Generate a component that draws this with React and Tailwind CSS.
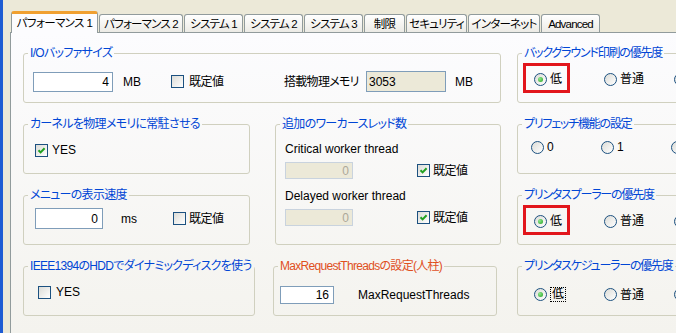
import React from 'react'

const tabs = [
  { label: 'パフォーマンス 1', w: 'w-[87px]', active: true },
  { label: 'パフォーマンス 2', w: 'w-[84px]' },
  { label: 'システム 1', w: 'w-[59px]' },
  { label: 'システム 2', w: 'w-[59px]' },
  { label: 'システム 3', w: 'w-[59px]' },
  { label: '制限', w: 'w-[41px]' },
  { label: 'セキュリティ', w: 'w-[61px]' },
  { label: 'インターネット', w: 'w-[72px]' },
  { label: 'Advanced', w: 'w-[59px]' },
]

const Check = ({ checked }) => (
  <span className="inline-flex h-[13px] w-[13px] shrink-0 items-center justify-center border border-[#1c5180] bg-gradient-to-br from-[#dcdcd7] to-white">
    {checked && (
      <svg width="11" height="11" viewBox="0 0 11 11">
        <path d="M2.5 5.2 L4.6 7.4 L8.6 3.2" fill="none" stroke="#21a121" strokeWidth="2" />
      </svg>
    )}
  </span>
)

const Radio = ({ checked }) => (
  <span className="inline-flex h-[13px] w-[13px] shrink-0 items-center justify-center rounded-full border border-[#1c5180] bg-gradient-to-br from-[#dcdcd7] to-white">
    {checked && <span className="h-[5px] w-[5px] rounded-full bg-[radial-gradient(circle_at_35%_35%,#8fe88c,#21a121)]" />}
  </span>
)

const Group = ({ title, className, titleClass, tight, children }) => (
  <fieldset className={`min-w-0 rounded-[3px] border border-[#d0d0bf] ${className}`}>
    <legend
      className={`ml-[4px] whitespace-nowrap px-[2px] leading-[14px] ${tight ? 'tracking-[-1.2px]' : 'tracking-[-0.7px]'} ${titleClass || 'text-[#0046d5]'}`}
    >
      {title}
    </legend>
    {children}
  </fieldset>
)

// right column: three radio options, the third one is cut off by the window edge
const RadioRow = ({ items, pad, marked, focus, first = true }) => (
  <div className={`flex items-center ${pad}`}>
    {items.map((t, i) => (
      <div key={i} className="relative flex w-[70px] shrink-0 items-center gap-[3px] whitespace-nowrap">
        <Radio checked={i === 0 && first} />
        {t && <span className={i === 0 && focus ? 'border border-dotted border-black px-[1px] leading-[13px]' : ''}>{t}</span>}
        {i === 0 && marked && (
          <span className="pointer-events-none absolute -left-[11px] -top-[9px] h-[30px] w-[47px] border-[3px] border-[#e2161c]" />
        )}
      </div>
    ))}
  </div>
)

export default function App() {
  return (
    <div className="flex h-[333px] w-[676px] overflow-hidden bg-[#ece9d8] font-['Liberation_Sans','Noto_Sans_CJK_JP',sans-serif] text-[12px] leading-[14px] text-black [font-feature-settings:'palt']">
      {/* window frame */}
      <div className="w-[3px] shrink-0 bg-[#1f5dd3]" />
      <div className="flex min-w-0 flex-1 flex-col pl-[7px] pt-[11px]">
        {/* tab strip */}
        <div className="relative z-10 flex h-[21px] items-end gap-[1px] pl-[1px]">
          {tabs.map((t) =>
            t.active ? (
              <div
                key={t.label}
                className={`${t.w} -mb-px flex h-[22px] shrink-0 items-center justify-center whitespace-nowrap rounded-t-[3px] border-x border-t-[3px] border-x-[#919b9c] border-t-[#f0a030] bg-[#fcfcfe] pb-[2px] text-[11.5px] tracking-[-0.6px]`}
              >
                {t.label}
              </div>
            ) : (
              <div
                key={t.label}
                className={`${t.w} flex h-[18px] shrink-0 items-center justify-center whitespace-nowrap rounded-t-[3px] border-x border-t border-[#919b9c] bg-gradient-to-b from-white to-[#ecebe5] text-[11.5px] tracking-[-0.8px]`}
              >
                {t.label}
              </div>
            )
          )}
        </div>

        {/* tab page */}
        <div className="flex-1 border-l border-t border-[#919b9c] bg-gradient-to-b from-[#fcfcfe] to-[#f4f3ee] pl-[12px] pt-[13px]">
          <div className="grid grid-cols-[234px_228px_200px] grid-rows-[57px_57px_57px_57px] gap-x-[16px] gap-y-[14px]">
            <Group title="I/Oバッファサイズ" className="col-span-2 col-start-1 row-start-1">
              <div className="flex items-center pl-[9px] pt-[11px]">
                <div className="flex h-[20px] w-[80px] items-center justify-end border border-[#7f9db9] bg-white pr-[3px]">4</div>
                <span className="w-[58px] pl-[10px]">MB</span>
                <div className="flex w-[113px] items-center gap-[5px]">
                  <Check />
                  <span className="tracking-[-0.5px]">既定値</span>
                </div>
                <span className="w-[82px] whitespace-nowrap tracking-[-0.7px]">搭載物理メモリ</span>
                <div className="flex h-[21px] w-[80px] items-center border border-[#7f9db9] bg-[#ece9d8] pl-[2px]">3053</div>
                <span className="pl-[9px]">MB</span>
              </div>
            </Group>

            <Group title="バックグラウンド印刷の優先度" tight className="col-start-3 row-start-1 w-[200px]">
              <RadioRow items={['低', '普通', '']} pad="pl-[16px] pt-[12px]" marked />
            </Group>

            <Group title="カーネルを物理メモリに常駐させる" className="col-start-1 row-start-2 w-[227px]">
              <div className="flex items-center gap-[4px] pl-[11px] pt-[12px]">
                <Check checked />
                <span>YES</span>
              </div>
            </Group>

            <Group title="追加のワーカースレッド数" className="col-start-2 row-span-2 row-start-2 ml-[2px]">
              <div className="flex flex-col pl-[9px] pt-[11px]">
                <span>Critical worker thread</span>
                <div className="mt-[6px] flex items-center">
                  <div className="flex h-[17px] w-[68px] items-center justify-end border border-[#c9d3de] bg-[#ece9d8] pr-[3px] text-[#aca899]">0</div>
                  <div className="ml-[64px] flex items-center gap-[3px]">
                    <Check checked />
                    <span className="tracking-[-0.5px]">既定値</span>
                  </div>
                </div>
                <span className="mt-[10px]">Delayed worker thread</span>
                <div className="mt-[6px] flex items-center">
                  <div className="flex h-[17px] w-[68px] items-center justify-end border border-[#c9d3de] bg-[#ece9d8] pr-[3px] text-[#aca899]">0</div>
                  <div className="ml-[64px] flex items-center gap-[3px]">
                    <Check checked />
                    <span className="tracking-[-0.5px]">既定値</span>
                  </div>
                </div>
              </div>
            </Group>

            <Group title="プリフェッチ機能の設定" tight className="col-start-3 row-start-2 w-[200px]">
              <RadioRow items={['0', '1', '']} pad="pl-[13px] pt-[9px]" first={false} />
            </Group>

            <Group title="メニューの表示速度" className="col-start-1 row-start-3 w-[227px]">
              <div className="flex items-center pl-[11px] pt-[6px]">
                <div className="flex h-[21px] w-[68px] items-center justify-end border border-[#7f9db9] bg-white pr-[4px]">0</div>
                <span className="w-[70px] pl-[18px]">ms</span>
                <div className="flex items-center gap-[3px]">
                  <Check />
                  <span className="tracking-[-0.5px]">既定値</span>
                </div>
              </div>
            </Group>

            <Group title="プリンタスプーラーの優先度" tight className="col-start-3 row-start-3 w-[200px]">
              <RadioRow items={['低', '普通', '']} pad="pl-[16px] pt-[12px]" marked />
            </Group>

            <Group title="IEEE1394のHDDでダイナミックディスクを使う" className="col-start-1 row-start-4 w-[232px]">
              <div className="flex items-center gap-[5px] pl-[14px] pt-[12px]">
                <Check />
                <span>YES</span>
              </div>
            </Group>

            <Group title="MaxRequestThreadsの設定(人柱)" titleClass="text-[#e0501e]" className="col-start-2 row-start-4 w-[224px]">
              <div className="flex items-center pl-[6px] pt-[13px]">
                <div className="flex h-[18px] w-[54px] items-center justify-end border border-[#7f9db9] bg-white pr-[4px]">16</div>
                <span className="pl-[24px]">MaxRequestThreads</span>
              </div>
            </Group>

            <Group title="プリンタスケジューラーの優先度" tight className="col-start-3 row-start-4 w-[200px]">
              <RadioRow items={['低', '普通', '']} pad="pl-[16px] pt-[14px]" focus />
            </Group>
          </div>
        </div>
      </div>
    </div>
  )
}
